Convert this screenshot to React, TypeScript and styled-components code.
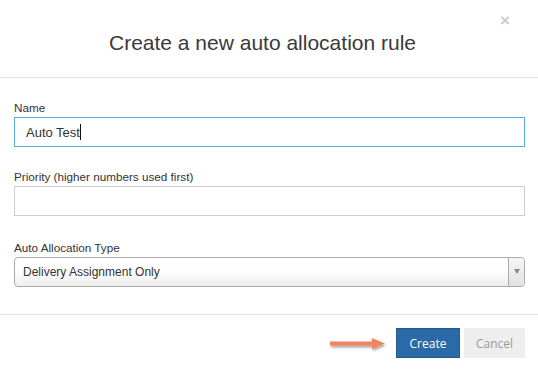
import React from "react";
import styled, { createGlobalStyle } from "styled-components";

const Global = createGlobalStyle`
  html, body { margin: 0; padding: 0; background: #fff; }
  body { font-family: "Liberation Sans", Arial, sans-serif; color: #333; }
  * { box-sizing: border-box; }
`;

const Modal = styled.div`
  width: 538px;
  height: 371px;
  background: #fff;
  display: flex;
  flex-direction: column;
`;

const Header = styled.div`
  position: relative;
  height: 78px;
  border-bottom: 1px solid #e5e5e5;
  display: flex;
  align-items: center;
  justify-content: center;
  padding: 8px 13px 0 0;
`;

const Title = styled.h4`
  margin: 0;
  font-family: "Liberation Sans", Arial, sans-serif;
  font-weight: normal;
  font-size: 21px;
  color: #3a3a3a;
`;

const Close = styled.button`
  position: absolute;
  top: 11px;
  right: 28px;
  border: 0;
  background: none;
  padding: 0;
  font-family: "Liberation Sans", Arial, sans-serif;
  font-size: 17px;
  font-weight: bold;
  line-height: 20px;
  color: #cdcbd6;
  cursor: pointer;
`;

const Body = styled.div`
  padding: 23px 13px 0 14px;
  height: 237px;
  border-bottom: 1px solid #e5e5e5;
`;

const Group = styled.div<{ $gap?: number }>`
  margin-bottom: ${(p) => p.$gap ?? 23}px;
`;

const Label = styled.label`
  display: block;
  font-size: 11.7px;
  line-height: 14px;
  margin-bottom: 2px;
  color: #333;
`;

const Input = styled.div<{ $focus?: boolean }>`
  height: 30px;
  border: 1px solid ${(p) => (p.$focus ? "#5aaee8" : "#cccccc")};
  display: flex;
  align-items: center;
  padding-left: 11px;
  font-size: 13px;
  color: #333;
`;

const Caret = styled.span`
  display: inline-block;
  width: 1px;
  height: 16px;
  background: #111;
`;

const Select = styled.div`
  height: 30px;
  border: 1px solid #aaa;
  border-radius: 4px;
  background: linear-gradient(#ffffff 40%, #eeeeee);
  display: flex;
  align-items: stretch;
  font-size: 12px;
  color: #333;
`;

const SelectText = styled.div`
  flex: 1;
  display: flex;
  align-items: center;
  padding-left: 8px;
`;

const SelectArrow = styled.div`
  width: 16px;
  border-left: 1px solid #aaa;
  border-radius: 0 4px 4px 0;
  background: linear-gradient(#f6f6f6, #e2e2e2);
  display: flex;
  align-items: center;
  justify-content: center;
  &::after {
    content: "";
    border-left: 3px solid transparent;
    border-right: 3px solid transparent;
    border-top: 5px solid #888;
    margin-top: -2px;
  }
`;

const Footer = styled.div`
  padding: 13px 13px 0 0;
  display: flex;
  justify-content: flex-end;
  align-items: center;
`;

const Arrow = styled.svg`
  margin-right: 8px;
  margin-top: 2px;
`;

const Button = styled.button<{ $primary?: boolean }>`
  height: 30px;
  padding: 0;
  width: ${(p) => (p.$primary ? "64px" : "61px")};
  margin-left: ${(p) => (p.$primary ? "0" : "4px")};
  border: 1px solid ${(p) => (p.$primary ? "#23598d" : "#eeeeee")};
  background: ${(p) => (p.$primary ? "#2a6aa6" : "#eeeeee")};
  color: ${(p) => (p.$primary ? "#ffffff" : "#999999")};
  font-family: "Open Sans", Arial, sans-serif;
  font-size: 12px;
  cursor: pointer;
`;

export default function App() {
  return (
    <>
      <Global />
      <Modal>
        <Header>
          <Title>Create a new auto allocation rule</Title>
          <Close aria-label="Close">×</Close>
        </Header>
        <Body>
          <Group>
            <Label>Name</Label>
            <Input $focus>
              Auto Test<Caret />
            </Input>
          </Group>
          <Group $gap={25}>
            <Label>Priority (higher numbers used first)</Label>
            <Input />
          </Group>
          <Group>
            <Label>Auto Allocation Type</Label>
            <Select>
              <SelectText>Delivery Assignment Only</SelectText>
              <SelectArrow />
            </Select>
          </Group>
        </Body>
        <Footer>
          <Arrow width="60" height="20" viewBox="0 0 60 20">
            <defs>
              <filter id="sh" x="-20%" y="-50%" width="140%" height="220%">
                <feDropShadow dx="1" dy="2" stdDeviation="1.3" floodColor="#000" floodOpacity="0.35" />
              </filter>
            </defs>
            <g filter="url(#sh)">
              <rect x="2" y="7.5" width="44" height="4" fill="#f0845c" />
              <polygon points="44,4 57,9.5 44,15" fill="#f0845c" />
            </g>
          </Arrow>
          <Button $primary>Create</Button>
          <Button>Cancel</Button>
        </Footer>
      </Modal>
    </>
  );
}
